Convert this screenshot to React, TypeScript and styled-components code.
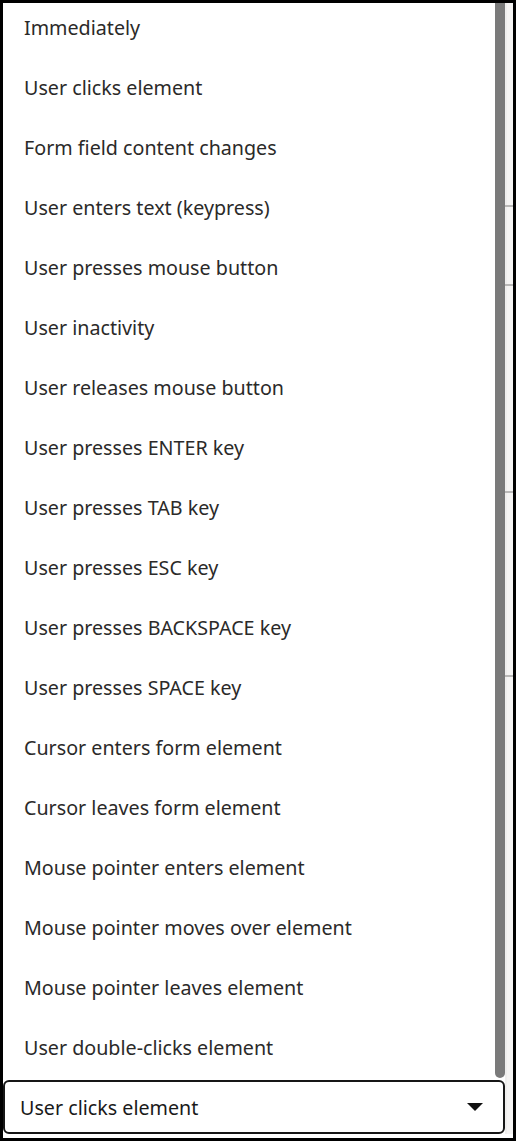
import React from "react";
import styled, { createGlobalStyle } from "styled-components";

const options = [
	"Immediately",
	"User clicks element",
	"Form field content changes",
	"User enters text (keypress)",
	"User presses mouse button",
	"User inactivity",
	"User releases mouse button",
	"User presses ENTER key",
	"User presses TAB key",
	"User presses ESC key",
	"User presses BACKSPACE key",
	"User presses SPACE key",
	"Cursor enters form element",
	"Cursor leaves form element",
	"Mouse pointer enters element",
	"Mouse pointer moves over element",
	"Mouse pointer leaves element",
	"User double-clicks element",
];

// faint lines of the page behind the popup, seen in the right gutter
const backdropLines = [205, 284, 491, 675];

const App = () => {
	return (
		<>
			<GlobalStyle />
			<Frame>
				<Popup>
					<ListArea>
						<List>
							{options.map((label) => (
								<Option key={label}>{label}</Option>
							))}
						</List>
						<Scrollbar>
							<Thumb />
						</Scrollbar>
						<Gutter>
							{backdropLines.map((y) => (
								<GutterLine key={y} style={{ top: y - 3 }} />
							))}
						</Gutter>
					</ListArea>
					<SelectRow>
						<Select>
							<SelectValue>User clicks element</SelectValue>
							<Arrow viewBox="0 0 16 8">
								<path d="M0 0 H16 L8 8 Z" fill="#111" />
							</Arrow>
						</Select>
						<Gutter />
					</SelectRow>
				</Popup>
			</Frame>
		</>
	);
};

export default App;

const GlobalStyle = createGlobalStyle`
	html, body {
		margin: 0;
		padding: 0;
		background: #000;
	}
	* {
		box-sizing: border-box;
	}
`;

const Frame = styled.div`
	width: 516px;
	height: 1141px;
	padding: 3px 3.5px 3px 3px;
	background: #000;
	font-family: "Noto Sans", "Open Sans", sans-serif;
`;

const Popup = styled.div`
	height: 100%;
	background: #fff;
	display: flex;
	flex-direction: column;
	overflow: hidden;
`;

const ListArea = styled.div`
	flex: 1;
	display: flex;
	min-height: 0;
	overflow: hidden;
`;

const List = styled.ul`
	flex: 1;
	list-style: none;
	margin: -5px 0 0;
	padding: 0;
`;

const Option = styled.li`
	height: 60px;
	line-height: 60px;
	padding-left: 21px;
	font-size: 19.7px;
	color: #2b2a29;
	white-space: nowrap;
`;

const Scrollbar = styled.div`
	width: 10px;
	padding-bottom: 2px;
	display: flex;
`;

const Thumb = styled.div`
	flex: 1;
	background: #7a7a7a;
	border-radius: 0 0 5px 5px;
`;

const Gutter = styled.div`
	position: relative;
	width: 7.5px;
	background: #f5f4f3;
	border-left: 2px solid #efeeed;
`;

const GutterLine = styled.div`
	position: absolute;
	left: -2px;
	right: 0;
	height: 2px;
	background: #b9b8b7;
`;

const SelectRow = styled.div`
	display: flex;
	height: 58px;
	padding-bottom: 4px;
`;

const Select = styled.div`
	flex: 1;
	display: flex;
	align-items: center;
	justify-content: space-between;
	border: 2px solid #161616;
	border-radius: 6px;
	padding: 0 20px 0 15px;
	background: #fff;
`;

const SelectValue = styled.span`
	font-size: 19.7px;
	color: #1a1a1a;
`;

const Arrow = styled.svg`
	width: 16px;
	height: 8px;
`;
